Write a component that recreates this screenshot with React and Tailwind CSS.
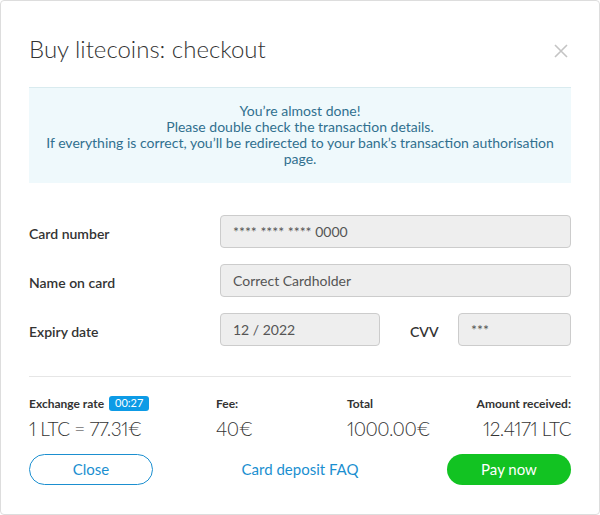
import React from 'react';

const font = { fontFamily: 'Lato, "Open Sans", Arial, sans-serif' };

const Field = ({ value, className = '' }) => (
  <div
    className={`h-[33px] flex items-center px-[12px] bg-[#eeeeee] border border-[#cccccc] rounded-[4px] text-[14px] text-[#555555] ${className}`}
  >
    {value}
  </div>
);

const Summary = ({ label, value, badge, className = '' }) => (
  <div className={className}>
    <div className="h-[15px] flex items-center gap-[5px] text-[12px] font-bold text-[#333333]">
      <span>{label}</span>
      {badge && (
        <span className="h-[15px] px-[6px] flex items-center rounded-[3px] bg-[#0d9be6] text-white text-[11px] font-normal">
          {badge}
        </span>
      )}
    </div>
    <div className="mt-[6px] text-[19px] font-light leading-[24px] tracking-[-0.5px] text-[#333333] proportional-nums">{value}</div>
  </div>
);

export default function App() {
  return (
    <div className="w-[600px] h-[515px] bg-white" style={font}>
      <div className="w-full h-full border border-[#dddddd] rounded-[4px] px-[28px] pt-[34px]">
        {/* Header */}
        <div className="flex items-center justify-between h-[28px]">
          <h1 className="text-[24px] font-light leading-[28px] text-[#333333]">Buy litecoins: checkout</h1>
          <button className="text-[#c4c4c4] mr-[3px] mt-[4px]">
            <svg width="14" height="14" viewBox="0 0 14 14" fill="none" stroke="currentColor" strokeWidth="1.6">
              <path d="M1 1 L13 13 M13 1 L1 13" />
            </svg>
          </button>
        </div>

        {/* Notice */}
        <div className="mt-[24px] bg-[#eff9fc] border-t border-[#d9ebef] pt-[15px] pb-[16px] px-[14px] text-center text-[14px] leading-[16px] text-[#31708f]">
          <p>You’re almost done!</p>
          <p>Please double check the transaction details.</p>
          <p>If everything is correct, you’ll be redirected to your bank’s transaction authorisation page.</p>
        </div>

        {/* Card form */}
        <div className="mt-[32px] flex flex-col gap-[16px]">
          <div className="flex items-center">
            <label className="w-[191px] text-[14px] font-semibold text-[#333333] pt-[4px]">Card number</label>
            <Field value="**** **** **** 0000" className="flex-1" />
          </div>
          <div className="flex items-center">
            <label className="w-[191px] text-[14px] font-semibold text-[#333333] pt-[4px]">Name on card</label>
            <Field value="Correct Cardholder" className="flex-1" />
          </div>
          <div className="flex items-center">
            <label className="w-[191px] text-[14px] font-semibold text-[#333333] pt-[4px]">Expiry date</label>
            <Field value="12 / 2022" className="w-[160px]" />
            <label className="w-[78px] pl-[30px] text-[14px] font-semibold text-[#333333] pt-[4px]">CVV</label>
            <Field value="***" className="flex-1" />
          </div>
        </div>

        <div className="mt-[30px] border-t border-[#e6e6e6]" />

        {/* Summary */}
        <div className="mt-[19px] flex">
          <Summary label="Exchange rate" badge="00:27" value="1 LTC = 77.31€" className="w-[187px]" />
          <Summary label="Fee:" value="40€" className="w-[131px]" />
          <Summary label="Total" value="1000.00€" className="flex-1" />
          <Summary label="Amount received:" value="12.4171 LTC" className="text-right [&>div]:justify-end" />
        </div>

        {/* Actions */}
        <div className="mt-[13px] flex items-center justify-between">
          <button className="w-[124px] h-[31px] rounded-full border border-[#1b8fd0] text-[#1b8fd0] text-[15px]">
            Close
          </button>
          <a href="#" className="text-[15px] text-[#1b8fd0]">Card deposit FAQ</a>
          <button className="w-[124px] h-[31px] rounded-full bg-[#12c322] text-white text-[15px]">
            Pay now
          </button>
        </div>
      </div>
    </div>
  );
}
